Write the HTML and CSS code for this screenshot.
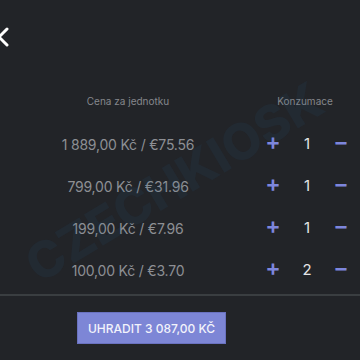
FILE: index.html
```html
<!DOCTYPE html>
<html lang="cs">

<head>
    <meta charset="UTF-8">
    <meta name="viewport" content="width=device-width, initial-scale=1.0">
    <title>Košík</title>
    <link rel="stylesheet" href="styles.css">
</head>

<body>
    <div class="page">
        <div class="top-bar">
            <button class="close-btn" aria-label="Zavřít">
                <svg width="20" height="20" viewBox="0 0 20 20">
                    <path d="M2 2 L18 18 M18 2 L2 18" stroke="#fff" stroke-width="3" stroke-linecap="round" fill="none"/>
                </svg>
            </button>
        </div>

        <div class="cart">
            <div class="cart-head">
                <span class="col-price">Cena za jednotku</span>
                <span class="col-qty">Konzumace</span>
            </div>

            <div class="cart-row">
                <span class="col-price price">1 889,00 Kč / €75.56</span>
                <div class="col-qty qty">
                    <span class="qty-btn">+</span>
                    <span class="qty-num">1</span>
                    <span class="qty-btn">&minus;</span>
                </div>
            </div>
            <div class="cart-row">
                <span class="col-price price">799,00 Kč / €31.96</span>
                <div class="col-qty qty">
                    <span class="qty-btn">+</span>
                    <span class="qty-num">1</span>
                    <span class="qty-btn">&minus;</span>
                </div>
            </div>
            <div class="cart-row">
                <span class="col-price price">199,00 Kč / €7.96</span>
                <div class="col-qty qty">
                    <span class="qty-btn">+</span>
                    <span class="qty-num">1</span>
                    <span class="qty-btn">&minus;</span>
                </div>
            </div>
            <div class="cart-row">
                <span class="col-price price">100,00 Kč / €3.70</span>
                <div class="col-qty qty">
                    <span class="qty-btn">+</span>
                    <span class="qty-num">2</span>
                    <span class="qty-btn">&minus;</span>
                </div>
            </div>
        </div>

        <div class="divider"></div>

        <div class="pay-bar">
            <button class="pay-btn">Uhradit 3 087,00 Kč</button>
        </div>

        <div class="watermark">CZECHKIOSK</div>
    </div>
</body>

</html>
```

FILE: styles.css
```css
body {
    margin: 0;
    padding: 0;
    background: #222428;
    font-family: Inter, "Noto Sans", sans-serif;
    color: #8d8f94;
}

.page {
    position: relative;
    width: 360px;
    height: 360px;
    overflow: hidden;
}

.top-bar {
    height: 74px;
    display: flex;
    align-items: flex-start;
}

.close-btn {
    margin: 27px 0 0 -11px;
    padding: 0;
    border: none;
    background: none;
    width: 20px;
    height: 20px;
}

.cart-head,
.cart-row {
    display: grid;
    grid-template-columns: 256px 1fr;
    align-items: center;
}

.cart-head {
    height: 20px;
    margin-top: 17px;
    margin-bottom: 12px;
    font-size: 10px;
    color: #85878c;
}

.cart-head .col-qty {
    text-align: center;
    padding-right: 6px;
}

.cart-row {
    height: 42px;
}

.col-price {
    text-align: center;
}

.price {
    font-size: 14px;
    letter-spacing: -0.2px;
}

.qty {
    display: flex;
    justify-content: center;
    align-items: center;
    padding-right: 8px;
}

.qty-btn,
.qty-num {
    width: 34px;
    text-align: center;
}

.qty-btn {
    color: #7d86dc;
    font-size: 23px;
    font-weight: 600;
    line-height: 22px;
    padding-bottom: 5px;
}

.qty-num {
    color: #e4e4e6;
    font-size: 15px;
    line-height: 22px;
}

.divider {
    height: 2px;
    margin-top: 3px;
    background: #3a3e41;
}

.pay-bar {
    display: flex;
    padding-left: 77px;
    margin-top: 16px;
}

.pay-btn {
    width: 149px;
    height: 32px;
    border: 1px solid #6a72c0;
    background: #7d86d6;
    color: #f2f3fb;
    font-family: Inter, "Noto Sans", sans-serif;
    font-size: 12px;
    font-weight: 500;
    text-transform: uppercase;
    padding: 0;
}

.watermark {
    position: absolute;
    left: 174px;
    top: 182px;
    transform: translate(-50%, -50%) rotate(-31deg);
    font-size: 50px;
    font-weight: 800;
    color: rgba(40, 95, 150, 0.10);
    white-space: nowrap;
    pointer-events: none;
}
```
